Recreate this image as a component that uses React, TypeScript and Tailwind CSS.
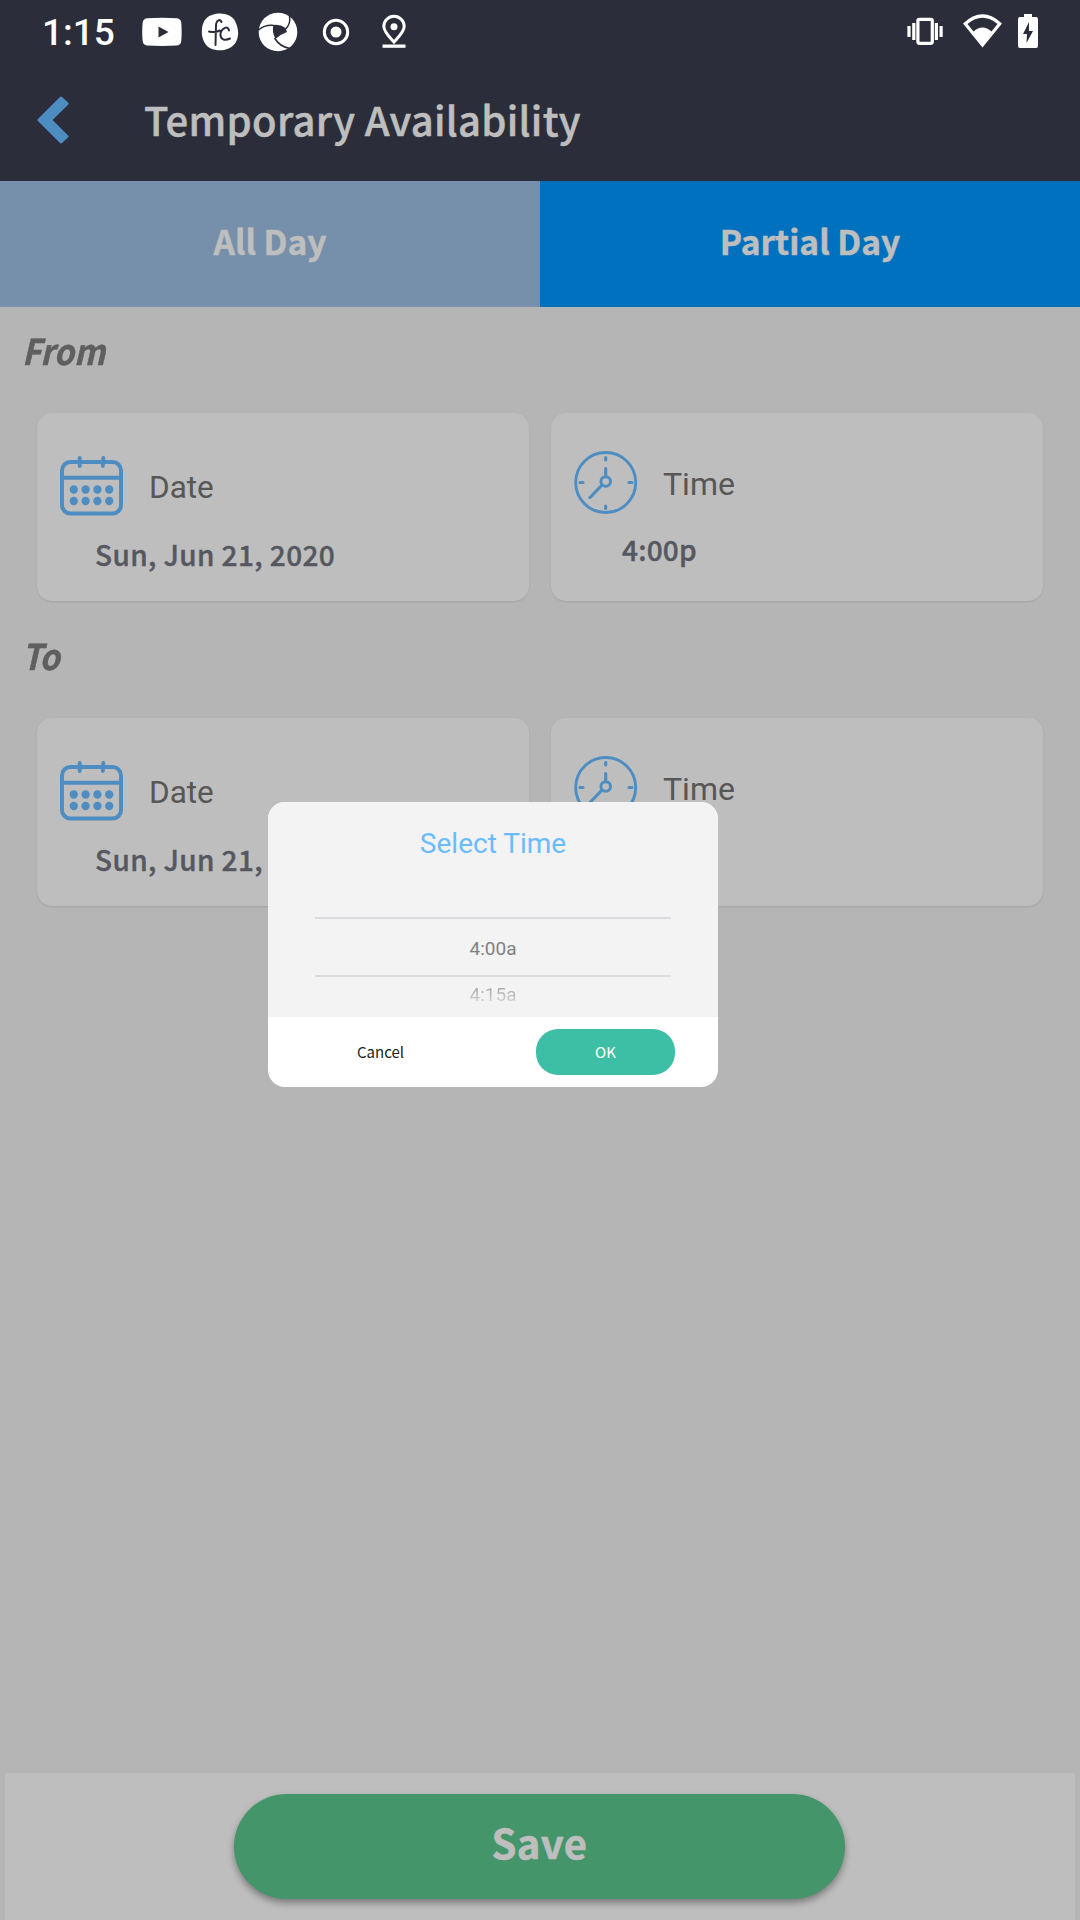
import React from "react";

const source = "font-['Noto_Sans_CJK_SC',sans-serif]";
const roboto = "font-[Roboto,sans-serif]";

function StatusIcons() {
  return (
    <>
      <svg className="ml-[27px] shrink-0" width="40" height="40" viewBox="0 0 40 40">
        <path fill="#fff" fillRule="evenodd" d="M5 6.3Q20 5.2 35 6.3 39 6.8 39.3 11 40 20 39.3 28.5 39 33 35 33.5 20 34.4 5 33.5 1 33 .6 28.5-.2 20 .6 11 1 6.800 5 6.300ZM16.500 14.500V25.500L26.500 20Z" />
      </svg>
      <svg className="ml-[18px] shrink-0" width="40" height="40" viewBox="0 0 40 40">
        <path fill="#fff" d="M12 3C22-.5 32 3 35 9 39 17 39 24 36 30 31 38 22 39 16 38 7 37 3 30 2 23 1 12 5 5 12 3Z" />
        <path fill="none" stroke="#2b2e3a" strokeWidth="2" strokeLinecap="round" d="M21.500 10C20 7 16.500 7.500 16 13L15.500 33M9 19.500Q15 21 20 18.500M29 18.500C28 13 22 16 20.500 21 20 28 25 29 30 26.500" />
      </svg>
      <svg className="ml-[18px] shrink-0" width="40" height="40" viewBox="0 0 40 40">
        <circle cx="20" cy="20" r="19.300" fill="#fff" />
        <path fill="#2b2e3a" d="M15.500 13Q22 12 27.500 16L29 20Q23 22 17.500 27Q13.500 19 15.500 13Z" />
        <path fill="none" stroke="#2b2e3a" strokeWidth="1.500" d="M.5 18Q7 12.500 16 13.500M27.500 17Q33 12 31.500 4M16.500 26Q22 35 32 36.500" />
      </svg>
      <svg className="ml-[18px] shrink-0" width="40" height="40" viewBox="0 0 40 40">
        <circle cx="20" cy="20" r="11.700" fill="none" stroke="#fff" strokeWidth="3" />
        <circle cx="20" cy="20" r="5.500" fill="#fff" />
      </svg>
      <svg className="ml-[18px] shrink-0" width="40" height="40" viewBox="0 0 40 40">
        <path fill="none" stroke="#fff" strokeWidth="3" d="M20 30C15 24.500 9.800 19.500 9.800 14.500A10.200 10.200 0 0 1 30.200 14.500C30.200 19.500 25 24.500 20 30Z" />
        <circle cx="20" cy="14.700" r="3.500" fill="#fff" />
        <path fill="#fff" d="M8.500 32.500h23v3.300h-23z" />
      </svg>
    </>
  );
}

function SystemIcons() {
  return (
    <svg className="ml-auto mr-[42px] shrink-0" width="134" height="40" viewBox="0 0 134 40">
      <g fill="none" stroke="#fff" strokeWidth="3.200">
        <rect x="13.900" y="7.300" width="14.400" height="24" rx="1.500" />
        <path d="M9.800 11v17M5 14v11M32.400 11v17M37.100 14v11" />
      </g>
      <path fill="#fff" fillRule="evenodd" d="M59 11.500Q78.500-7 98 11.500L78.500 35.500ZM63.500 12L69.500 19.500Q78.500 11.500 87.500 19.500L93.500 12Q78.500-.5 63.500 12Z" />
      <path fill="#fff" fillRule="evenodd" d="M120 2h8v3h4q2 0 2 2v27q0 2-2 2h-16q-2 0-2-2V7q0-2 2-2h4zM125 10l-6 12h4l-.5 9 6.500-12h-4z" />
    </svg>
  );
}

function CalendarIcon() {
  return (
    <svg className="shrink-0" width="63" height="60" viewBox="0 0 64 60" preserveAspectRatio="none">
      <g fill="none" stroke="#4e8dc2" strokeWidth="4">
        <rect x="2" y="6" width="60" height="51.500" rx="8.500" />
        <path d="M2 21.700h60" />
        <path strokeLinecap="round" d="M20 2v8M44 2l-.5 8" />
      </g>
      <g fill="#4e8dc2">
        {[14, 26, 38, 50].map((x) => (
          <React.Fragment key={x}>
            <circle cx={x} cy="33.500" r="4.200" />
            <circle cx={x} cy="45" r="4.200" />
          </React.Fragment>
        ))}
      </g>
    </svg>
  );
}

function ClockIcon() {
  return (
    <svg className="shrink-0" width="64" height="64" viewBox="0 0 64 64">
      <g fill="none" stroke="#4e8dc2" strokeWidth="2.900">
        <circle cx="31.700" cy="31.500" r="30" />
        <circle cx="31.700" cy="30.500" r="4.800" />
        <path strokeLinecap="round" strokeWidth="3.200" d="M31.700 25.500V17.500M28 34L16 46.500M31.700 6.500v2.500M31.700 55v2.500M6 31.500h3M55 31.500h3" />
      </g>
    </svg>
  );
}

function Card({ kind, value }: { kind: "Date" | "Time"; value: string }) {
  const date = kind === "Date";
  return (
    <div className="h-[188px] w-[492px] rounded-[15px] bg-[#bebebe] shadow-[0_1px_2px_rgba(0,0,0,0.1)]">
      <div className={date ? "flex h-[121px] items-start pl-[23px] pt-[43px]" : "flex h-[116px] items-start pl-[23px] pt-[38px]"}>
        {date ? <CalendarIcon /> : <ClockIcon />}
        <span className={`${roboto} ${date ? "ml-[26px] mt-[13px] text-[31.500px]" : "ml-[25px] mt-[14px] text-[32px]"} leading-[38px] text-[#575757]`}>
          {kind}
        </span>
      </div>
      <div className={`${source} ${date ? "pl-[58px] tracking-[0.4px]" : "pl-[71px] tracking-[0.2px]"} whitespace-nowrap text-[28px] font-medium leading-[40px] text-[#555860] [-webkit-text-stroke:0.4px_#555860]`}>
        {value}
      </div>
    </div>
  );
}

function Section({ title, date, time }: { title: string; date: string; time: string }) {
  return (
    <section className="h-[305px]">
      <h2 className={`${source} h-[106px] pl-[22px] pt-[18px] text-[35.500px] font-bold italic leading-[50px] text-[#5f5f5f] [-webkit-text-stroke:0.5px_#5f5f5f]`}>
        <span className="inline-block origin-left scale-x-[0.91]">{title}</span>
      </h2>
      <div className="flex gap-[22px] pl-[37px]">
        <Card kind="Date" value={date} />
        <Card kind="Time" value={time} />
      </div>
    </section>
  );
}

function TimeDialog() {
  return (
    <div className="absolute left-[268px] top-[802px] flex h-[285px] w-[450px] flex-col overflow-hidden rounded-[17px] bg-white">
      <div className={`${roboto} flex h-[215px] flex-col items-center bg-[#f3f3f3]`}>
        <div className="mt-[24px] text-[28px] leading-[36px] text-[#6bbcff]">Select Time</div>
        <div className="mt-[55px] flex h-[60px] w-[356px] items-center justify-center border-y-2 border-[#dadce0] pt-[4px] text-[19px] text-[#818181]">
          4:00a
        </div>
        <div className="mt-[6px] bg-linear-to-b from-[#9c9c9c] to-[#e2e2e2] bg-clip-text text-[19px] leading-[24px] text-transparent">
          4:15a
        </div>
      </div>
      <div className={`${source} flex h-[70px] items-center text-[15px]`}>
        <button className="w-[225px] text-[#222]">Cancel</button>
        <button className="ml-[43px] h-[46px] w-[139px] rounded-[22px] bg-[#3dbfa6] text-white">OK</button>
      </div>
    </div>
  );
}

export default function App() {
  return (
    <div className="relative flex h-[1920px] w-[1080px] flex-col overflow-hidden bg-[#b5b5b5]">
      <header className="h-[181px] bg-[#2b2e3a]">
        <div className="flex h-[64px] items-center">
          <span className={`${roboto} w-[73px] ml-[42px] mt-[2px] whitespace-nowrap text-[37px] font-medium leading-[46px] text-white`}>1:15</span>
          <StatusIcons />
          <SystemIcons />
        </div>
        <div className="flex h-[112px] items-center">
          <svg className="ml-[37px] shrink-0" width="32" height="48" viewBox="0 0 32 48">
            <path fill="#4e8dc2" stroke="#4e8dc2" strokeWidth="3" strokeLinejoin="round" d="M2 24L24 2l6 5.700L13.500 24 30 40.500 24 46Z" />
          </svg>
          <h1 className={`${source} -mt-[2px] ml-[75px] whitespace-nowrap text-[40px] font-medium leading-[56px] tracking-[0.3px] text-[#bebebe] [-webkit-text-stroke:0.5px_#bebebe]`}>
            Temporary Availability
          </h1>
        </div>
      </header>
      <nav className={`${source} grid h-[126px] grid-cols-2 text-[33.500px] font-bold text-[#bebebe] [-webkit-text-stroke:0.5px_#bebebe]`}>
        <button className="bg-[#7690ab] pb-[6px]">All Day</button>
        <button className="bg-[#0071be] pb-[6px]">Partial Day</button>
      </nav>
      <main className="flex-1">
        <Section title="From" date="Sun, Jun 21, 2020" time="4:00p" />
        <Section title="To" date="Sun, Jun 21, 2020" time="" />
      </main>
      <footer className="mx-[5px] flex h-[147px] bg-[#bebebe] pl-[229px] pt-[21px]">
        <button className={`${source} h-[105px] w-[611px] rounded-full bg-[#45956a] pb-[9px] text-[40px] font-bold tracking-[0.3px] text-[#bebebe] shadow-[0_4px_7px_rgba(0,0,0,0.35)] [-webkit-text-stroke:0.6px_#bebebe]`}>
          Save
        </button>
      </footer>
      <TimeDialog />
    </div>
  );
}
